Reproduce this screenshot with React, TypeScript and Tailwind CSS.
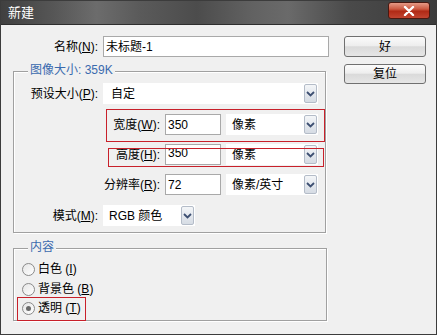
import React from "react";

const F = { fontFamily: '"Liberation Sans", "Noto Sans CJK SC", sans-serif' };

function Arrow() {
  return (
    <div className="w-[13px] h-[19px] mr-[1px] rounded-[2px] border border-[#b4bcc8] bg-[linear-gradient(to_bottom,#f4f6f8_0%,#e4e8ee_50%,#d6dce4_100%)] flex items-center justify-center">
      <svg width="9" height="6" viewBox="0 0 9 6">
        <path d="M1 1 L4.5 4.5 L8 1" fill="none" stroke="#3d4f72" strokeWidth="1.8" />
      </svg>
    </div>
  );
}

function Select({ w, text, tx = 8 }: { w: string; text: string; tx?: number }) {
  return (
    <div className={`${w} h-[21px] bg-white flex items-center justify-between`}>
      <span className="text-[12px] text-black leading-none" style={{ paddingLeft: tx }}>
        {text}
      </span>
      <Arrow />
    </div>
  );
}

function Input({ w, text, up = false }: { w: string; text: string; up?: boolean }) {
  return (
    <div
      className={`${w} h-[21px] bg-white border border-[#a9a9a9] flex ${up ? "items-start" : "items-center"} px-[2px]`}
    >
      <span className={`text-[12px] text-black leading-none ${up ? "mt-[2px]" : ""}`}>{text}</span>
    </div>
  );
}

function Label({ w, children }: { w: string; children: React.ReactNode }) {
  return <div className={`${w} text-right text-[12px] text-black leading-none shrink-0`}>{children}</div>;
}

function Radio({ checked, label, acc }: { checked?: boolean; label: string; acc: string }) {
  return (
    <div className="flex items-center h-[20px]">
      <div className="w-[13px] h-[13px] rounded-full border border-[#8a8a8a] bg-[linear-gradient(135deg,#e6e6e6,#ffffff)] flex items-center justify-center">
        {checked && <div className="w-[5px] h-[5px] rounded-full bg-[#6a6a6a]" />}
      </div>
      <span className="ml-[3px] text-[12px] text-black leading-none">
        {label} (<span className="underline">{acc}</span>)
      </span>
    </div>
  );
}

export default function App() {
  return (
    <div className="w-[438px] h-[336px] overflow-hidden" style={F}>
      <div className="w-[437px] h-[335px] bg-[#f0f0f0] border border-[#3c3c3c] flex flex-col">
        {/* Title bar */}
        <div className="h-[24px] shrink-0 flex items-center justify-between bg-[linear-gradient(90deg,#404040_0%,#565656_12%,#6c6c6c_22%,#5a5a5a_32%,#4c4c4c_45%,#626262_58%,#6a6a6a_66%,#4a4a4a_80%,#3c3c3c_100%)] border-b border-[#2e2e2e]">
          <span className="ml-[7px] text-[13px] text-white leading-none">新建</span>
          <div className="mr-[6px] mt-[-4px] w-[42px] h-[17px] rounded-[3px] border border-[#4a1810] bg-[linear-gradient(to_bottom,#e59a86_0%,#cc5a42_40%,#b02a16_55%,#c24430_100%)] flex items-center justify-center">
            <svg width="12" height="10" viewBox="0 0 12 10">
              <path d="M2 1 L10 9 M10 1 L2 9" stroke="#ffffff" strokeWidth="2.4" strokeLinecap="round" />
            </svg>
          </div>
        </div>

        {/* Body */}
        <div className="flex flex-1">
          {/* Left column */}
          <div className="w-[327px] flex flex-col">
            {/* Name row */}
            <div className="mt-[11px] flex items-center h-[21px]">
              <Label w="w-[97px]">
                名称(<span className="underline">N</span>):
              </Label>
              <div className="ml-[5px]">
                <Input w="w-[226px]" text="未标题-1" />
              </div>
            </div>

            {/* Image size group */}
            <div className="relative mt-[14px] ml-[12px] w-[313px] h-[162px] border border-[#a0a0a0] shadow-[inset_1px_1px_0_#ffffff,1px_1px_0_#ffffff]">
              <span className="absolute top-[-8px] left-[14px] px-[2px] bg-[#f0f0f0] text-[12px] text-[#3a6aae] leading-none">
                图像大小: 359K
              </span>

              <div className="mt-[11px] flex items-center h-[21px]">
                <Label w="w-[84px]">
                  预设大小(<span className="underline">P</span>):
                </Label>
                <div className="ml-[5px]">
                  <Select w="w-[215px]" text="自定" tx={8} />
                </div>
              </div>

              <div className="mt-[10px] flex items-center h-[21px]">
                <Label w="w-[146px]">
                  宽度(<span className="underline">W</span>):
                </Label>
                <div className="ml-[5px]">
                  <Input w="w-[56px]" text="350" />
                </div>
                <div className="ml-[5px]">
                  <Select w="w-[92px]" text="像素" tx={6} />
                </div>
              </div>

              <div className="mt-[9px] flex items-center h-[21px]">
                <Label w="w-[146px]">
                  高度(<span className="underline">H</span>):
                </Label>
                <div className="ml-[5px]">
                  <Input w="w-[56px]" text="350" up />
                </div>
                <div className="ml-[5px]">
                  <Select w="w-[92px]" text="像素" tx={6} />
                </div>
              </div>

              <div className="mt-[9px] flex items-center h-[21px]">
                <Label w="w-[146px]">
                  分辨率(<span className="underline">R</span>):
                </Label>
                <div className="ml-[5px]">
                  <Input w="w-[56px]" text="72" />
                </div>
                <div className="ml-[5px]">
                  <Select w="w-[92px]" text="像素/英寸" tx={6} />
                </div>
              </div>

              <div className="mt-[10px] flex items-center h-[21px]">
                <Label w="w-[84px]">
                  模式(<span className="underline">M</span>):
                </Label>
                <div className="ml-[5px]">
                  <Select w="w-[92px]" text="RGB 颜色" tx={6} />
                </div>
              </div>

              {/* annotation boxes */}
              <div className="absolute left-[92px] top-[37px] w-[219px] h-[33px] border border-[#c8202a]" />
              <div className="absolute left-[94px] top-[76px] w-[216px] h-[19px] border border-[#c8202a]" />
            </div>

            {/* Content group */}
            <div className="relative mt-[15px] ml-[12px] w-[314px] h-[73px] border border-[#a0a0a0] shadow-[inset_1px_1px_0_#ffffff,1px_1px_0_#ffffff] pl-[8px] pt-[10px]">
              <span className="absolute top-[-8px] left-[14px] px-[2px] bg-[#f0f0f0] text-[12px] text-[#3a6aae] leading-none">
                内容
              </span>
              <Radio label="白色" acc="I" />
              <Radio label="背景色" acc="B" />
              <div className="mt-[-1px]">
                <Radio label="透明" acc="T" checked />
              </div>
              <div className="absolute left-[3px] top-[48px] w-[69px] h-[24px] border border-[#c8202a]" />
            </div>
          </div>

          {/* Right column */}
          <div className="ml-[16px] mt-[11px] flex flex-col gap-[7px]">
            <button className="w-[82px] h-[21px] rounded-[3px] border border-[#707070] bg-[linear-gradient(to_bottom,#fbfbfb_0%,#eeeeee_45%,#dadada_52%,#e6e6e6_100%)] text-[12px] text-black leading-none">
              好
            </button>
            <button className="w-[82px] h-[20px] rounded-[3px] border border-[#707070] bg-[linear-gradient(to_bottom,#fbfbfb_0%,#eeeeee_45%,#dadada_52%,#e6e6e6_100%)] text-[12px] text-black leading-none">
              复位
            </button>
          </div>
        </div>
      </div>
    </div>
  );
}
